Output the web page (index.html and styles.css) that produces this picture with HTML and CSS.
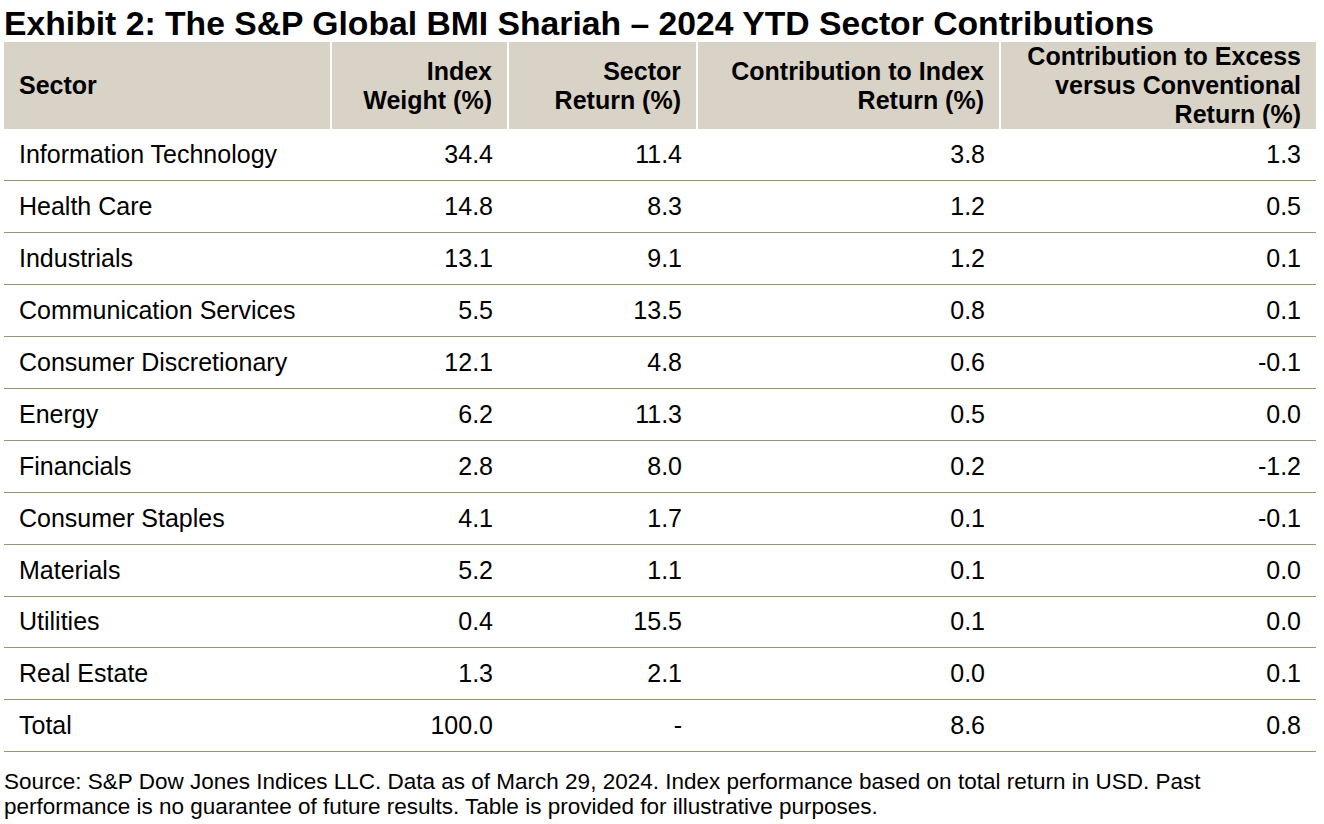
FILE: index.html
```html
<!DOCTYPE html>
<html lang="en">
<head>
<meta charset="utf-8">
<title>Exhibit 2</title>
<link rel="stylesheet" href="styles.css">
</head>
<body>
<div class="page">
  <h1 class="title">Exhibit 2: The S&amp;P Global BMI Shariah – 2024 YTD Sector Contributions</h1>
  <table class="data">
    <colgroup>
      <col class="c1"><col class="c2"><col class="c3"><col class="c4"><col class="c5">
    </colgroup>
    <thead>
      <tr>
        <th class="left">Sector</th>
        <th>Index<br>Weight (%)</th>
        <th>Sector<br>Return (%)</th>
        <th>Contribution to Index<br>Return (%)</th>
        <th>Contribution to Excess<br>versus Conventional<br>Return (%)</th>
      </tr>
    </thead>
    <tbody>
      <tr><td class="left">Information Technology</td><td>34.4</td><td>11.4</td><td>3.8</td><td>1.3</td></tr>
      <tr><td class="left">Health Care</td><td>14.8</td><td>8.3</td><td>1.2</td><td>0.5</td></tr>
      <tr><td class="left">Industrials</td><td>13.1</td><td>9.1</td><td>1.2</td><td>0.1</td></tr>
      <tr><td class="left">Communication Services</td><td>5.5</td><td>13.5</td><td>0.8</td><td>0.1</td></tr>
      <tr><td class="left">Consumer Discretionary</td><td>12.1</td><td>4.8</td><td>0.6</td><td>-0.1</td></tr>
      <tr><td class="left">Energy</td><td>6.2</td><td>11.3</td><td>0.5</td><td>0.0</td></tr>
      <tr><td class="left">Financials</td><td>2.8</td><td>8.0</td><td>0.2</td><td>-1.2</td></tr>
      <tr><td class="left">Consumer Staples</td><td>4.1</td><td>1.7</td><td>0.1</td><td>-0.1</td></tr>
      <tr><td class="left">Materials</td><td>5.2</td><td>1.1</td><td>0.1</td><td>0.0</td></tr>
      <tr><td class="left">Utilities</td><td>0.4</td><td>15.5</td><td>0.1</td><td>0.0</td></tr>
      <tr><td class="left">Real Estate</td><td>1.3</td><td>2.1</td><td>0.0</td><td>0.1</td></tr>
      <tr><td class="left">Total</td><td>100.0</td><td>-</td><td>8.6</td><td>0.8</td></tr>
    </tbody>
  </table>
  <p class="source">Source: S&amp;P Dow Jones Indices LLC. Data as of March 29, 2024. Index performance based on total return in USD. Past performance is no guarantee of future results. Table is provided for illustrative purposes.</p>
</div>
</body>
</html>
```

FILE: styles.css
```css
html, body {
  margin: 0;
  padding: 0;
  background: #ffffff;
  color: #000000;
  font-family: "Liberation Sans", Arial, sans-serif;
}

.page {
  padding: 4px 8px 0 4px;
  width: 1312px;
}

.title {
  margin: 0;
  font-size: 33.7px;
  line-height: 38px;
  font-weight: bold;
  white-space: nowrap;
}

.data {
  width: 1312px;
  border-collapse: collapse;
  table-layout: fixed;
}

.c1 { width: 327px; }
.c2 { width: 177px; }
.c3 { width: 189px; }
.c4 { width: 303px; }
.c5 { width: 316px; }

.data th {
  background: #d9d2c6;
  font-weight: bold;
  font-size: 25px;
  line-height: 29px;
  height: 87px;
  padding: 0 15px 0 15px;
  text-align: right;
  vertical-align: middle;
  border-right: 2px solid #ffffff;
  box-sizing: border-box;
}

.data th:last-child {
  border-right: none;
}

.data td {
  font-size: 25px;
  height: 51.9px;
  box-sizing: border-box;
  padding: 0 15px;
  text-align: right;
  vertical-align: middle;
  border-bottom: 1px solid #9d9176;
  white-space: nowrap;
}

.data th.left,
.data td.left {
  text-align: left;
}

.source {
  margin: 17px 0 0 0;
  font-size: 22.5px;
  line-height: 25px;
}
```
